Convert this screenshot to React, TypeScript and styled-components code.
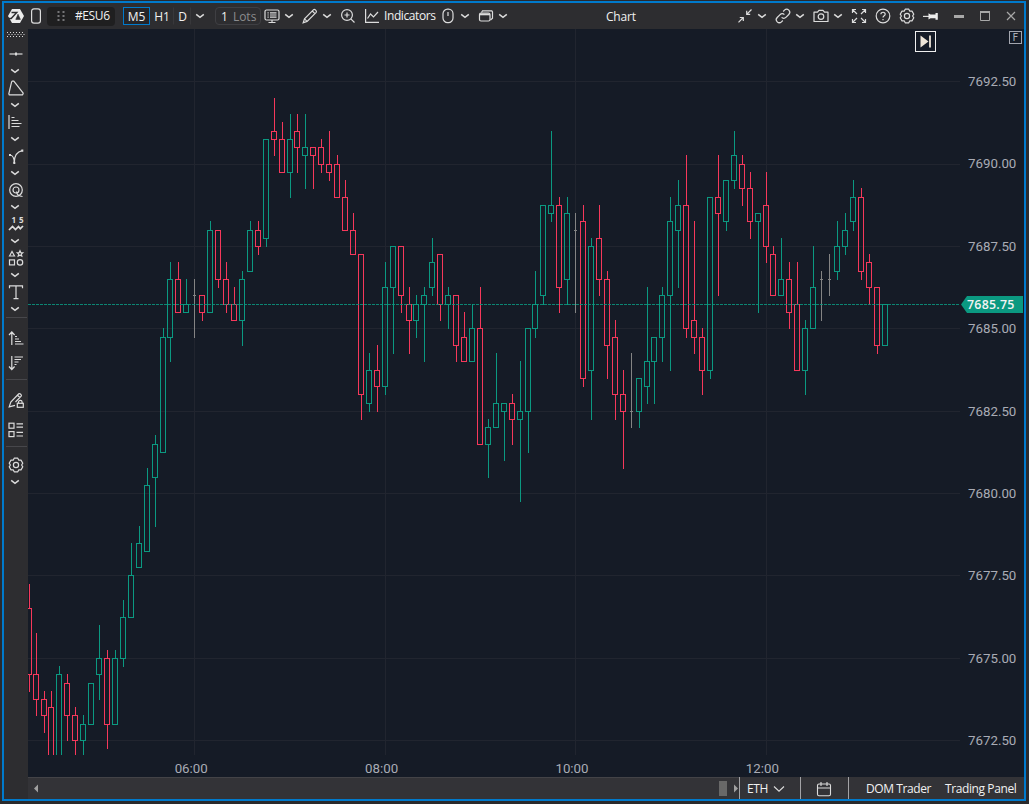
import React from "react";
import styled, { createGlobalStyle } from "styled-components";

type Kind = "up" | "down" | "flat";
// bar, high, body top, body bottom, low (in ticks below 7692.50), kind
type Candle = [number, number, number, number, number, Kind];

const TICK = 8.236;
const PLOT = { left: 28, top: 29, width: 932, height: 726 };

const COLORS: Record<Kind, string> = {
	up: "#0b9981",
	down: "#f6385b",
	flat: "#848484",
};

const candles: Candle[] = [
	[-21, 61, 64, 72, 74, "down"],
	[-20, 67, 72, 75, 77, "down"],
	[-19, 74, 75, 77, 79, "down"],
	[-18, 74, 76, 84, 84, "down"],
	[-17, 71, 72, 84, 84, "up"],
	[-16, 72, 73, 77, 80, "down"],
	[-15, 76, 77, 80, 84, "down"],
	[-14, 77, 78, 80, 84, "up"],
	[-13, 73, 73, 78, 78, "up"],
	[-12, 66, 70, 72, 75, "up"],
	[-11, 69, 70, 78, 81, "down"],
	[-10, 69, 70, 78, 78, "up"],
	[-9, 63, 65, 70, 71, "up"],
	[-8, 56, 60, 65, 65, "up"],
	[-7, 54, 56, 59, 59, "up"],
	[-6, 47, 49, 57, 57, "up"],
	[-5, 43, 44, 48, 54, "up"],
	[-4, 30, 31, 45, 45, "up"],
	[-3, 22, 24, 31, 34, "up"],
	[-2, 22, 24, 28, 28, "down"],
	[-1, 24, 27, 28, 28, "up"],
	[0, 24, 26, 26, 31, "flat"],
	[1, 26, 26, 28, 29, "down"],
	[2, 17, 18, 28, 28, "up"],
	[3, 18, 18, 24, 25, "down"],
	[4, 22, 24, 27, 28, "down"],
	[5, 25, 27, 29, 29, "down"],
	[6, 23, 24, 29, 32, "up"],
	[7, 17, 18, 23, 23, "up"],
	[8, 17, 18, 20, 21, "down"],
	[9, 7, 7, 19, 20, "up"],
	[10, 2, 6, 7, 9, "down"],
	[11, 5, 7, 11, 11, "down"],
	[12, 4, 7, 11, 14, "up"],
	[13, 4, 6, 8, 11, "down"],
	[14, 4, 8, 9, 13, "up"],
	[15, 8, 8, 9, 13, "down"],
	[16, 7, 8, 10, 11, "down"],
	[17, 6, 10, 11, 12, "down"],
	[18, 9, 10, 14, 14, "down"],
	[19, 12, 14, 18, 18, "down"],
	[20, 16, 18, 21, 21, "down"],
	[21, 21, 21, 38, 41, "down"],
	[22, 33, 35, 39, 40, "up"],
	[23, 32, 35, 37, 40, "down"],
	[24, 22, 25, 37, 38, "up"],
	[25, 20, 20, 25, 33, "up"],
	[26, 20, 20, 26, 28, "down"],
	[27, 25, 27, 29, 33, "down"],
	[28, 26, 27, 29, 31, "up"],
	[29, 25, 26, 27, 34, "up"],
	[30, 19, 22, 25, 26, "up"],
	[31, 21, 21, 27, 29, "down"],
	[32, 25, 26, 27, 30, "up"],
	[33, 26, 26, 32, 34, "down"],
	[34, 28, 31, 34, 34, "down"],
	[35, 27, 30, 34, 34, "up"],
	[36, 25, 30, 44, 44, "down"],
	[37, 41, 42, 44, 48, "up"],
	[38, 33, 39, 42, 42, "up"],
	[39, 39, 39, 40, 46, "up"],
	[40, 38, 39, 41, 44, "down"],
	[41, 34, 40, 41, 51, "up"],
	[42, 30, 30, 40, 45, "up"],
	[43, 23, 27, 30, 31, "up"],
	[44, 15, 15, 26, 27, "up"],
	[45, 6, 15, 16, 17, "up"],
	[46, 14, 15, 25, 28, "down"],
	[47, 14, 16, 24, 27, "up"],
	[48, 16, 18, 18, 28, "flat"],
	[49, 15, 17, 36, 37, "down"],
	[50, 19, 20, 35, 41, "up"],
	[51, 15, 19, 24, 26, "down"],
	[52, 23, 24, 32, 36, "down"],
	[53, 29, 31, 38, 41, "down"],
	[54, 35, 38, 40, 47, "down"],
	[55, 33, 40, 40, 42, "flat"],
	[56, 36, 36, 40, 42, "up"],
	[57, 25, 34, 37, 39, "up"],
	[58, 31, 31, 34, 39, "up"],
	[59, 25, 26, 31, 34, "up"],
	[60, 14, 17, 26, 35, "up"],
	[61, 12, 15, 18, 25, "up"],
	[62, 9, 15, 30, 31, "down"],
	[63, 17, 29, 31, 33, "down"],
	[64, 30, 31, 35, 38, "down"],
	[65, 14, 14, 35, 36, "up"],
	[66, 9, 14, 16, 26, "down"],
	[67, 12, 12, 17, 18, "up"],
	[68, 6, 9, 12, 13, "up"],
	[69, 9, 10, 13, 15, "down"],
	[70, 11, 13, 17, 19, "down"],
	[71, 16, 16, 17, 28, "up"],
	[72, 11, 15, 20, 22, "down"],
	[73, 20, 21, 26, 26, "down"],
	[74, 19, 24, 26, 26, "up"],
	[75, 22, 24, 28, 30, "down"],
	[76, 22, 27, 35, 35, "down"],
	[77, 29, 30, 35, 38, "up"],
	[78, 20, 25, 30, 30, "up"],
	[79, 23, 24, 24, 29, "flat"],
	[80, 21, 24, 24, 26, "flat"],
	[81, 17, 20, 23, 24, "up"],
	[82, 16, 18, 20, 21, "up"],
	[83, 12, 14, 17, 18, "up"],
	[84, 13, 14, 23, 24, "down"],
	[85, 21, 22, 25, 27, "down"],
	[86, 25, 25, 32, 33, "down"],
	[87, 27, 27, 32, 32, "up"],
];

const prices = ["7692.50", "7690.00", "7687.50", "7685.00", "7682.50", "7680.00", "7677.50", "7675.00", "7672.50"];
const times = ["06:00", "08:00", "10:00", "12:00"];

const barX = (n: number) => Math.max(29, Math.round(194.295 + n * 7.934)) - PLOT.left;
const tickY = (k: number) => Math.round(81.3 + k * TICK) - PLOT.top;

function Plot() {
	return (
		<svg width={PLOT.width} height={PLOT.height} shapeRendering="crispEdges">
			{prices.map((p, i) => (
				<rect key={p} x={0} y={tickY(i * 10)} width={PLOT.width} height={1} fill="#21252f" />
			))}
			{times.map((t, i) => (
				<rect key={t} x={[194, 385, 575, 766][i] - PLOT.left} y={0} width={1} height={PLOT.height} fill="#21252f" />
			))}
			{candles.map(([n, high, top, bottom, low, kind]) => {
				const x = barX(n);
				const color = COLORS[kind];
				if (kind === "flat") {
					return (
						<g key={n} fill={color}>
							<rect x={x} y={tickY(high)} width={1} height={tickY(low) - tickY(high) + 1} />
							<rect x={x - 1} y={tickY(top)} width={3} height={1} />
						</g>
					);
				}
				return (
					<g key={n} fill={color}>
						<rect x={x} y={tickY(high)} width={1} height={tickY(top) - tickY(high)} />
						<rect x={x} y={tickY(bottom)} width={1} height={tickY(low) - tickY(bottom) + (low > bottom ? 1 : 0)} />
						<rect
							x={x - 2.5}
							y={tickY(top) + 0.5}
							width={5}
							height={tickY(bottom) - tickY(top)}
							fill="none"
							stroke={color}
						/>
					</g>
				);
			})}
			<line x1={0} x2={PLOT.width} y1={275.5} y2={275.5} stroke="#0b9981" strokeDasharray="3 1" opacity={0.85} />
		</svg>
	);
}

const StyledIcon = styled.svg`
	fill: none;
	stroke: #dcdcdc;
	overflow: visible;
`;

const DigitText = styled.text`
	font: 700 8px "Open Sans", sans-serif;
	fill: #dcdcdc;
	stroke: none;
`;

type IconProps = { w?: number; h?: number; children: React.ReactNode; sw?: number };

const Icon = ({ w = 16, h = 16, sw = 1.2, children }: IconProps) => (
	<StyledIcon width={w} height={h} viewBox={`0 0 ${w} ${h}`} strokeWidth={sw}>
		{children}
	</StyledIcon>
);

const Chevron = () => (
	<Icon w={10} h={6} sw={1.5}>
		<path d="M1.2 1.3 5 4.4 8.8 1.3" />
	</Icon>
);

const Gear = () => (
	<Icon>
		<path d="M6.2 1.2h3.6l1 2 2.2-.1 1.8 3.1L13.6 8l1.2 1.8-1.8 3.1-2.2-.1-1 2H6.2l-1-2-2.2.1-1.8-3.1L2.4 8 1.2 6.2 3 3.1l2.2.1z" strokeLinejoin="round" />
		<circle cx="8" cy="8" r="2.6" />
	</Icon>
);

const tools: React.ReactNode[] = [
	<Icon>
		<path d="M1.5 8h13" />
		<path d="M7 8h2" strokeWidth="3" />
	</Icon>,
	<Icon>
		<path d="M4.2 1.2h1.6l9.4 12-.6 1.7H1.3L.8 13.8 3.6 1.8z" strokeLinejoin="round" />
	</Icon>,
	<Icon>
		<path d="M1 1v14M3.5 3.5h3M3.5 6.5h7M3.5 9.5h10M3.5 12.5h8" />
	</Icon>,
	<Icon>
		<path d="M2 7c3 .3 4.2 3 4.3 8M6.3 14.5c0-6 1.5-10.5 8-11.8" />
		<path d="M1 7h2M5.3 14.8h2M13.3 2.7h2" strokeWidth="2.2" />
	</Icon>,
	<Icon>
		<circle cx="8" cy="8" r="6.3" />
		<circle cx="8" cy="8" r="3" />
		<path d="M8.5 9.5c.3 3.5 2 4.8 6 5" />
	</Icon>,
	<Icon>
		<path d="M1 14 4.5 10.5l3 3 3-3 1.8 2.2L15 10" strokeWidth="1.7" />
		<DigitText x="3.5" y="6.6">1</DigitText>
		<DigitText x="11" y="6.6">5</DigitText>
	</Icon>,
	<Icon>
		<path d="M1.5 6 4 1.4l2.5 4.6zM12 .8l.8 1.8 2 .1-1.5 1.4.5 2L12 5.2l-1.8.9.5-2-1.5-1.4 2-.1z" />
		<rect x="1.5" y="9.9" width="5" height="5" />
		<circle cx="12" cy="12.4" r="2.7" />
	</Icon>,
	<Icon>
		<path d="M1.5 4.3V1.8h13v2.5M8 1.8v12.7M5.5 14.6h5" />
	</Icon>,
];

function App() {
	return (
		<StyledDesktop>
			<GlobalStyles />
			<StyledWindow>
				<StyledHeader>
					<Slot $x={4} $w={16}>
						<Icon>
							<path d="M4 1h8l4 7-4 7H4L0 8z" fill="#ececec" stroke="none" />
							<path d="M3.5 4.4h5.2L3.2 10.4H0" stroke="#2d2d30" strokeWidth="1.5" />
							<path d="M10 6.2 7.8 11.4h4.6z" fill="#2d2d30" stroke="#2d2d30" strokeWidth=".6" />
						</Icon>
					</Slot>
					<Slot $x={7} $w={10}>
						<Icon w={10} h={16}>
							<rect x=".6" y=".8" width="8.8" height="14.4" rx="2.4" />
						</Icon>
					</Slot>
					<StyledSymbol>
						<Icon w={8} h={12}>
							<path d="M.5 2h2M.5 6h2M.5 10h2M5.5 2h2M5.5 6h2M5.5 10h2" strokeWidth="1.6" stroke="#929294" />
						</Icon>
						<Label $w={35}>#ESU6</Label>
					</StyledSymbol>
					<StyledPeriod $w={27} $active>M5</StyledPeriod>
					<StyledPeriod $w={24}>H1</StyledPeriod>
					<StyledPeriod $w={17}>D</StyledPeriod>
					<Slot $x={4} $w={10}><Chevron /></Slot>
					<StyledLots>
						<b>1</b>Lots
					</StyledLots>
					<Slot $x={3} $w={16}>
						<Icon>
							<rect x="1" y="2" width="14" height="10" rx="1.5" />
							<path d="M3.5 4.8h1.2M3.5 7h1.2M3.5 9.2h1.2M6 4.8h6.5M6 7h6.5M6 9.2h6.5M8 12v2M4.5 14.5h7" />
						</Icon>
					</Slot>
					<Slot $x={4} $w={10}><Chevron /></Slot>
					<Slot $x={8} $w={16}>
						<Icon>
							<path d="M1.2 14.8 2.5 10.8 11.6 1.7c1-1 3.6 1.4 2.6 2.6L5.1 13.4zM10.3 3l2.6 2.6M2.5 10.8l2.6 2.6" />
						</Icon>
					</Slot>
					<Slot $x={4} $w={10}><Chevron /></Slot>
					<Slot $x={8} $w={16}>
						<Icon>
							<circle cx="7" cy="7" r="5.4" />
							<path d="M10.8 10.8 14.5 14.5M4.5 7h5M7 4.5v5" />
						</Icon>
					</Slot>
					<Slot $x={8} $w={16}>
						<Icon>
							<path d="M1.6 1v13.3H15" />
							<path d="M3.5 10.5 6.5 6l3 3L14 4" />
						</Icon>
					</Slot>
					<Slot $x={4} $w={52}><Label $w={52}>Indicators</Label></Slot>
					<Slot $x={6} $w={12}>
						<Icon w={12} h={16}>
							<rect x="1" y="1.2" width="10" height="13.4" rx="4.6" />
							<path d="M6 4v4" />
						</Icon>
					</Slot>
					<Slot $x={6} $w={10}><Chevron /></Slot>
					<Slot $x={8} $w={16}>
						<Icon>
							<rect x="1.5" y="5" width="10.5" height="8" rx="1.5" />
							<path d="M2 6.3h10" strokeWidth="2" />
							<path d="M3.5 4.5 4.5 2.8h9.3L14.5 4v6.3L12.5 12" />
						</Icon>
					</Slot>
					<Slot $x={4} $w={10}><Chevron /></Slot>
					<StyledTitle>Chart</StyledTitle>
					<Slot $x={0} $w={16}>
						<Icon>
							<path d="M1.5 14.3 6.3 9.5M2.8 9.5h3.5V13M14.5 1.5 9.7 6.3M9.7 2.8v3.5h3.5" />
						</Icon>
					</Slot>
					<Slot $x={4} $w={10}><Chevron /></Slot>
					<Slot $x={8} $w={16}>
						<Icon>
							<path d="M6.6 9.4a3 3 0 0 0 4.3 0l2.9-2.9a3 3 0 0 0-4.3-4.3L8.2 3.5M9.4 6.6a3 3 0 0 0-4.3 0L2.2 9.5a3 3 0 0 0 4.3 4.3l1.3-1.3" />
						</Icon>
					</Slot>
					<Slot $x={4} $w={10}><Chevron /></Slot>
					<Slot $x={8} $w={16}>
						<Icon>
							<path d="M1 4.2h3.5L6 2.3h4l1.5 1.9H15v9.3H1z" strokeLinejoin="round" />
							<circle cx="8" cy="8.6" r="2.8" />
						</Icon>
					</Slot>
					<Slot $x={4} $w={10}><Chevron /></Slot>
					<Slot $x={8} $w={16}>
						<Icon>
							<path d="M1.5 5V1.5H5M1.5 1.5l4.5 4.5M11 1.5h3.5V5M14.5 1.5 10 6M1.5 11v3.5H5M1.5 14.5 6 10M14.5 11v3.5H11M14.5 14.5 10 10" />
						</Icon>
					</Slot>
					<Slot $x={8} $w={16}>
						<Icon>
							<circle cx="8" cy="8" r="6.8" />
							<path d="M5.9 6.3c0-2.8 4.3-2.6 4.3 0C10.2 7.9 8 7.8 8 9.6M8 11v1.2" />
						</Icon>
					</Slot>
					<Slot $x={8} $w={16}><Gear /></Slot>
					<Slot $x={8} $w={16}>
						<Icon>
							<path d="M0 8.4h6" />
							<path d="M5.5 5.2v6.4l2-1.4h5v1.6h2.3V5h-2.3v1.6h-5z" fill="#ececec" stroke="none" />
						</Icon>
					</Slot>
					<Slot $x={14} $w={12}>
						<Icon w={12} h={12}>
							<path d="M1 6.5h10" strokeWidth="3" stroke="#a8a8a8" />
						</Icon>
					</Slot>
					<Slot $x={14} $w={12}>
						<Icon w={12} h={12}>
							<path d="M1.5 1v9.5h9V1" stroke="#a8a8a8" strokeWidth="1" />
							<path d="M1 2h10" stroke="#a8a8a8" strokeWidth="2" />
						</Icon>
					</Slot>
					<Slot $x={14} $w={12}>
						<Icon w={12} h={12}>
							<path d="M2 2l8 8M10 2l-8 8" stroke="#a8a8a8" />
						</Icon>
					</Slot>
				</StyledHeader>

				<StyledMain>
					<StyledSidebar>
						<StyledGrip>
							<Icon w={18} h={6}>
								<path d="M0 .5h18M0 4.5h18" strokeDasharray="1 2" strokeWidth="1" />
								<path d="M1.5 2.5h16" strokeDasharray="1 2" strokeWidth="1" />
							</Icon>
						</StyledGrip>
						{tools.map((tool, i) => (
							<StyledTool key={i}>
								<StyledToolIcon>{tool}</StyledToolIcon>
								<StyledMore><Chevron /></StyledMore>
							</StyledTool>
						))}
						<StyledDivider />
						<StyledAction $top={12}>
							<Icon>
								<path d="M3.8 15V2M1 5l2.8-3L6.6 5M7 6.5h2M7 9h4M7 11.5h6M7 14h8.5" />
							</Icon>
						</StyledAction>
						<StyledAction $top={9}>
							<Icon>
								<path d="M3.8 1v13.5M1 11.5l2.8 3 2.8-3M6.5 2h8.5M6.5 4.5h6.5M6.5 7h4M6.5 9.5h2" />
							</Icon>
						</StyledAction>
						<StyledDivider $top={8} />
						<StyledAction $top={12}>
							<Icon>
								<path d="M7 13.3 1.2 14.8 2.8 10 10.8 1.8c1-.9 3.3 1.2 2.4 2.4L7.5 10M9.5 3.2 12 5.6" />
								<rect x="9.3" y="11.3" width="6" height="4" />
								<path d="M10.5 11.3v-1.2c0-2.2 3.6-2.2 3.6 0v1.2" />
							</Icon>
						</StyledAction>
						<StyledAction $top={14}>
							<Icon>
								<rect x="1" y="1.2" width="5" height="5" />
								<rect x="1" y="9.6" width="5" height="5" />
								<path d="M8.5 1.8H15M8.5 5.2H15M8.5 10.4H15M8.5 14H15" />
							</Icon>
						</StyledAction>
						<StyledDivider $top={8} />
						<StyledAction $top={10}><Gear /></StyledAction>
						<StyledAction $top={6}>
							<StyledMore><Chevron /></StyledMore>
						</StyledAction>
					</StyledSidebar>

					<StyledContent>
						<StyledChart>
							<div>
								<Plot />
								<StyledTimes>
									{times.map((t) => (
										<span key={t}>{t}</span>
									))}
								</StyledTimes>
							</div>
							<StyledPrices>
								{prices.map((p) => (
									<span key={p}>{p}</span>
								))}
							</StyledPrices>
							<StyledLastPrice>7685.75</StyledLastPrice>
							<StyledSkip>
								<svg width="13" height="13">
									<path d="M1.5.5v12l8-6z" fill="#efe6d8" />
									<path d="M11 .5v12" stroke="#efe6d8" strokeWidth="1.8" />
								</svg>
							</StyledSkip>
							<StyledFlag>F</StyledFlag>
						</StyledChart>

						<StyledFooter>
							<StyledScroll>
								<svg width="4" height="9"><path d="M4 .5v8L0 4.5z" fill="#a0a0a0" /></svg>
								<StyledThumb />
								<svg width="4" height="9"><path d="M0 .5v8l4-4z" fill="#a0a0a0" /></svg>
							</StyledScroll>
							<StyledCell $w={61} $pad={7}>
								<Label $w={21}>ETH</Label>
								<Icon w={12} h={8} sw={1.1}>
									<path d="M1 1.5 6 6.2 11 1.5" />
								</Icon>
							</StyledCell>
							<StyledCell $w={48} $pad={15}>
								<Icon sw={1.1}>
									<rect x="1.5" y="3" width="13" height="11.7" rx="1.5" />
									<path d="M1.5 7h13M5 1v4M11 1v4" />
								</Icon>
							</StyledCell>
							<StyledLinks>
								<Label $w={65}>DOM Trader</Label>
								<Label $w={72}>Trading Panel</Label>
							</StyledLinks>
						</StyledFooter>
					</StyledContent>
				</StyledMain>
			</StyledWindow>
		</StyledDesktop>
	);
}

const GlobalStyles = createGlobalStyle`
	* {
		box-sizing: border-box;
	}

	body {
		margin: 0;
		background-color: #2d2d30;
		font-family: "Open Sans", "Noto Sans", sans-serif;
		font-size: 12px;
		color: #f1f1f1;
	}

	svg {
		display: block;
		flex: none;
	}
`;

const StyledDesktop = styled.div`
	height: 804px;
	padding: 1px 3px 3px 2px;
	background-color: #2a2a2c;
	overflow: hidden;
`;

const StyledWindow = styled.div`
	display: flex;
	flex-direction: column;
	height: 800px;
	border: 2px solid #007acc;
	background-color: #2d2d30;
`;

const StyledHeader = styled.header`
	display: flex;
	align-items: center;
	height: 26px;
	flex: none;
	padding-right: 7px;
`;

const Slot = styled.div<{ $x: number; $w: number }>`
	display: flex;
	align-items: center;
	justify-content: center;
	flex: none;
	width: ${({ $w }) => $w}px;
	margin-left: ${({ $x }) => $x}px;
`;

const Label = styled.span<{ $w: number }>`
	width: ${({ $w }) => $w}px;
	flex: none;
	letter-spacing: -0.4px;
	white-space: nowrap;
	line-height: 16px;
`;

const StyledSymbol = styled.div`
	display: flex;
	align-items: center;
	gap: 10px;
	width: 68px;
	height: 19px;
	margin: 0 8px 0 6px;
	padding-left: 10px;
	border-radius: 4px;
	background-color: #1f1f20;
`;

const StyledPeriod = styled.div<{ $w: number; $active?: boolean }>`
	display: flex;
	align-items: center;
	justify-content: center;
	width: ${({ $w }) => $w}px;
	height: 18px;
	border: 1px solid ${({ $active }) => ($active ? "#007acc" : "transparent")};
	border-right-color: ${({ $active }) => ($active ? "#007acc" : "#38383b")};
	background-color: ${({ $active }) => ($active ? "#252528" : "transparent")};
`;

const StyledLots = styled.div`
	display: flex;
	align-items: center;
	gap: 5px;
	width: 46px;
	height: 18px;
	margin-left: 10px;
	padding-left: 5px;
	border: 1px solid #3f3f43;
	border-radius: 4px;
	color: #8c8c8e;

	b {
		font-weight: 400;
		color: #f1f1f1;
	}
`;

const StyledTitle = styled.div`
	flex: 1;
	padding-left: 98px;
	letter-spacing: -0.2px;
`;

const StyledMain = styled.div`
	display: flex;
	flex: 1;
	min-height: 0;
`;

const StyledSidebar = styled.aside`
	display: flex;
	flex-direction: column;
	align-items: center;
	width: 24px;
	flex: none;
`;

const StyledGrip = styled.div`
	height: 15px;
	padding-top: 3px;
`;

const StyledTool = styled.div`
	display: flex;
	flex-direction: column;
	align-items: center;
	height: 34px;
`;

const StyledToolIcon = styled.div`
	height: 24px;
	padding-top: 2px;
`;

const StyledMore = styled.div`
	padding-right: 2px;
`;

const StyledDivider = styled.hr<{ $top?: number }>`
	width: 21px;
	height: 1px;
	margin: ${({ $top = 1 }) => $top}px 0 0;
	border: none;
	background-color: #47474b;
`;

const StyledAction = styled.div<{ $top: number }>`
	margin-top: ${({ $top }) => $top}px;
`;

const StyledContent = styled.div`
	display: flex;
	flex-direction: column;
	flex: 1;
`;

const StyledChart = styled.section`
	position: relative;
	display: grid;
	grid-template-columns: 932px 1fr;
	height: 748px;
	overflow: hidden;
	background-color: #151b26;
	font-family: Roboto, sans-serif;
	font-size: 13.3px;
	color: #a9acb5;
`;

const StyledTimes = styled.div`
	display: flex;
	padding-left: 68px;
	line-height: 27px;

	span {
		width: 190.4px;
		text-align: center;
	}
`;

const StyledPrices = styled.div`
	padding: 12px 0 0 8px;

	span {
		display: block;
		line-height: 82.37px;
	}
`;

const StyledLastPrice = styled.div`
	position: absolute;
	top: 267px;
	right: 1px;
	width: 62px;
	height: 17px;
	padding-left: 6px;
	background-color: #0b9981;
	clip-path: polygon(0 50%, 6px 0, 100% 0, 100% 100%, 6px 100%);
	font: 600 12.4px/17px "Open Sans", sans-serif;
	letter-spacing: 0.25px;
	color: #f4f4f4;
`;

const StyledSkip = styled.div`
	position: absolute;
	top: 2px;
	left: 887px;
	display: flex;
	align-items: center;
	justify-content: center;
	width: 21px;
	height: 21px;
	border: 1px solid #efefef;
`;

const StyledFlag = styled.div`
	position: absolute;
	top: 2px;
	right: 2px;
	width: 13px;
	height: 13px;
	border: 1px solid #a3a6af;
	font: 10px/11px "DejaVu Sans", sans-serif;
	text-align: center;
`;

const StyledFooter = styled.footer`
	display: flex;
	height: 22px;
	background-color: #333337;
`;

const StyledScroll = styled.div`
	display: flex;
	align-items: center;
	width: 711px;
	padding: 0 1px 0 6px;
	border-top: 1px solid #434347;
`;

const StyledThumb = styled.div`
	width: 8px;
	height: 15px;
	margin: 0 7px 0 auto;
	background-color: #686868;
`;

const StyledCell = styled.div<{ $w: number; $pad: number }>`
	display: flex;
	align-items: center;
	gap: 5px;
	width: ${({ $w }) => $w}px;
	padding: 1px 0 0 ${({ $pad }) => $pad}px;
	border-left: 1px solid #a3a3a6;
`;

const StyledLinks = styled.div`
	display: flex;
	align-items: center;
	gap: 14px;
	flex: 1;
	padding: 1px 0 0 17px;
	border-left: 1px solid #a3a3a6;
`;

export default App;
